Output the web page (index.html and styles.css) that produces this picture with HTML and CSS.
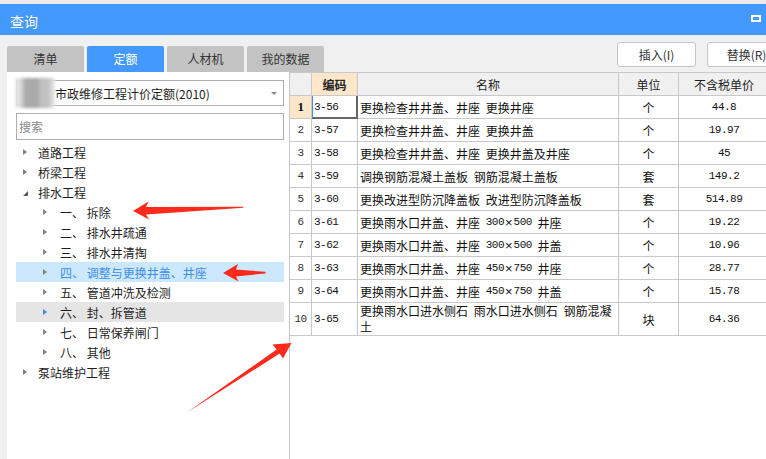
FILE: index.html
```html
<!DOCTYPE html>
<html lang="zh">
<head>
<meta charset="utf-8">
<title>查询</title>
<link rel="stylesheet" href="styles.css">
</head>
<body>
<div class="app">
  <div class="topstrip"></div>
  <div class="titlebar">
    <span class="title">查询</span>
    <span class="max-icon"></span>
  </div>
  <div class="toolbar">
    <div class="tabs">
      <div class="tab">清单</div>
      <div class="tab active">定额</div>
      <div class="tab">人材机</div>
      <div class="tab">我的数据</div>
    </div>
    <div class="actions">
      <button class="btn">插入(I)</button>
      <button class="btn">替换(R)</button>
    </div>
  </div>
  <div class="main">
    <div class="left">
      <div class="select">
        <span class="blur"></span>
        <span class="select-text">市政维修工程计价定额(2010)</span>
        <span class="caret"></span>
      </div>
      <div class="search">搜索</div>
      <ul class="tree">
        <li class="node l0"><span class="tri"></span>道路工程</li>
        <li class="node l0"><span class="tri"></span>桥梁工程</li>
        <li class="node l0"><span class="tri open"></span>排水工程</li>
        <li class="node l1"><span class="tri"></span>一、 拆除</li>
        <li class="node l1"><span class="tri"></span>二、 排水井疏通</li>
        <li class="node l1"><span class="tri"></span>三、 排水井清掏</li>
        <li class="node l1 selected"><span class="tri"></span>四、 调整与更换井盖、井座</li>
        <li class="node l1"><span class="tri"></span>五、 管道冲洗及检测</li>
        <li class="node l1 hover2"><span class="tri"></span>六、 封、拆管道</li>
        <li class="node l1"><span class="tri"></span>七、 日常保养闸门</li>
        <li class="node l1"><span class="tri"></span>八、 其他</li>
        <li class="node l0"><span class="tri"></span>泵站维护工程</li>
      </ul>
    </div>
    <div class="gridp">
      <div class="row head">
        <div class="cell"></div>
        <div class="cell ctr code-head">编码</div>
        <div class="cell ctr">名称</div>
        <div class="cell ctr">单位</div>
        <div class="cell ctr">不含税单价</div>
      </div>
      <div class="row">
        <div class="cell ctr num cur">1</div>
        <div class="cell code sel">3-56</div>
        <div class="cell name">更换检查井井盖、井座 更换井座</div>
        <div class="cell ctr">个</div>
        <div class="cell ctr price">44.8</div>
      </div>
      <div class="row">
        <div class="cell ctr num">2</div>
        <div class="cell code">3-57</div>
        <div class="cell name">更换检查井井盖、井座 更换井盖</div>
        <div class="cell ctr">个</div>
        <div class="cell ctr price">19.97</div>
      </div>
      <div class="row">
        <div class="cell ctr num">3</div>
        <div class="cell code">3-58</div>
        <div class="cell name">更换检查井井盖、井座 更换井盖及井座</div>
        <div class="cell ctr">个</div>
        <div class="cell ctr price">45</div>
      </div>
      <div class="row">
        <div class="cell ctr num">4</div>
        <div class="cell code">3-59</div>
        <div class="cell name">调换钢筋混凝土盖板 钢筋混凝土盖板</div>
        <div class="cell ctr">套</div>
        <div class="cell ctr price">149.2</div>
      </div>
      <div class="row">
        <div class="cell ctr num">5</div>
        <div class="cell code">3-60</div>
        <div class="cell name">更换改进型防沉降盖板 改进型防沉降盖板</div>
        <div class="cell ctr">套</div>
        <div class="cell ctr price">514.89</div>
      </div>
      <div class="row">
        <div class="cell ctr num">6</div>
        <div class="cell code">3-61</div>
        <div class="cell name">更换雨水口井盖、井座 <span class="dim">300</span><span class="times">×</span><span class="dim">500</span> 井座</div>
        <div class="cell ctr">个</div>
        <div class="cell ctr price">19.22</div>
      </div>
      <div class="row">
        <div class="cell ctr num">7</div>
        <div class="cell code">3-62</div>
        <div class="cell name">更换雨水口井盖、井座 <span class="dim">300</span><span class="times">×</span><span class="dim">500</span> 井盖</div>
        <div class="cell ctr">个</div>
        <div class="cell ctr price">10.96</div>
      </div>
      <div class="row">
        <div class="cell ctr num">8</div>
        <div class="cell code">3-63</div>
        <div class="cell name">更换雨水口井盖、井座 <span class="dim">450</span><span class="times">×</span><span class="dim">750</span> 井座</div>
        <div class="cell ctr">个</div>
        <div class="cell ctr price">28.77</div>
      </div>
      <div class="row">
        <div class="cell ctr num">9</div>
        <div class="cell code">3-64</div>
        <div class="cell name">更换雨水口井盖、井座 <span class="dim">450</span><span class="times">×</span><span class="dim">750</span> 井盖</div>
        <div class="cell ctr">个</div>
        <div class="cell ctr price">15.78</div>
      </div>
      <div class="row tall">
        <div class="cell ctr num">10</div>
        <div class="cell code">3-65</div>
        <div class="cell name wrap"><span class="line">更换雨水口进水侧石 雨水口进水侧石 钢筋混凝</span><span class="line">土</span></div>
        <div class="cell ctr">块</div>
        <div class="cell ctr price">64.36</div>
      </div>
    </div>
  </div>
  <svg class="arrows" width="766" height="459" viewBox="0 0 766 459">
    <polygon points="133,211 148.5,201.5 146,207 243,206.8 243.5,207.8 146,214.5 149,219.5" />
    <polygon points="223,273 238,264 236,269.5 265.5,271.8 265.5,273.4 236,276.5 238.5,281.5" />
    <polygon points="291.5,343 272.5,344.5 276.6,349.6 186.5,412.8 279.6,353.6 283,358.5" />
  </svg>
</div>
</body>
</html>
```

FILE: styles.css
```css
* { box-sizing: border-box; }
html, body { margin: 0; padding: 0; }
body {
  width: 766px;
  height: 459px;
  overflow: hidden;
  background: #f0f0f0;
  font-family: "Noto Sans CJK SC", "Noto Sans", sans-serif;
  font-size: 12px;
  color: #1e1e1e;
}
.app { position: relative; width: 766px; height: 459px; overflow: hidden; }

.topstrip { height: 4px; background: #ebebeb; }

.titlebar {
  height: 31px;
  background: #4499ff;
  display: flex;
  align-items: center;
  padding: 0 5px 0 10px;
}
.title { color: #fff; font-size: 14px; line-height: 1; margin-top: 2px; }
.max-icon {
  margin-left: auto;
  width: 10px;
  height: 7px;
  border: 2px solid #fff;
  margin-top: -2px;
}

.toolbar { height: 37px; display: flex; }
.tabs { display: flex; gap: 3px; padding-left: 7px; align-self: flex-end; }
.tab {
  width: 77px;
  height: 26px;
  background: #c3c3c3;
  border-radius: 2px 2px 0 0;
  display: flex;
  align-items: center;
  justify-content: center;
  color: #333;
  font-size: 12px;
  padding-bottom: 1px;
}
.tab.active { background: #4499ff; color: #fff; }
.actions { margin-left: auto; margin-right: -20px; display: flex; gap: 11px; padding-top: 7px; }
.btn {
  width: 79px;
  height: 25px;
  background: #fff;
  border: 1px solid #c6c6c6;
  border-radius: 3px;
  font: inherit;
  color: #333;
  padding: 0;
}

.main { display: flex; height: 387px; }
.left {
  width: 283px;
  flex: none;
  margin-left: 7px;
  background: #fff;
  border-right: 1px solid #c8c8c8;
  padding: 8px 0 0 9px;
}
.select {
  width: 268px;
  height: 26px;
  border: 1px solid #abadb3;
  display: flex;
  align-items: center;
}
.blur {
  flex: none;
  width: 40px;
  height: 30px;
  margin-left: -2px;
  background: linear-gradient(90deg, #ececec 0%, #dcdcdc 14%, #ababab 26%, #a9a9a9 55%, #bdbdbd 64%, #c4c4c4 84%, #ededed 100%);
  filter: blur(1.5px);
}
.select-text { color: #1e1e1e; }
.caret {
  margin-left: auto;
  margin-right: 6px;
  width: 0;
  height: 0;
  border-left: 3px solid transparent;
  border-right: 3px solid transparent;
  border-top: 3px solid #8a8a8a;
}
.search {
  margin-top: 7px;
  width: 268px;
  height: 27px;
  border: 1px solid #abadb3;
  color: #8a8a8a;
  padding-left: 2px;
  display: flex;
  align-items: center;
}

.tree { list-style: none; margin: 2px 0 0; padding: 0; width: 268px; }
.node {
  height: 20px;
  display: flex;
  align-items: center;
  white-space: pre;
  color: #1e1e1e;
}
.l0 { padding-left: 7px; }
.l1 { padding-left: 27px; }
.tri {
  flex: none;
  width: 0;
  height: 0;
  border-left: 4px solid #808080;
  border-top: 3.5px solid transparent;
  border-bottom: 3.5px solid transparent;
}
.l0 .tri { margin-right: 11px; }
.l1 .tri { margin-right: 13px; }
.l0 .tri.open {
  border-left: 0;
  border-bottom: 0;
  border-top: 5px solid transparent;
  border-right: 5px solid #5a5a5a;
  margin-right: 10px;
  margin-top: 2px;
}
.selected { background: #cce8ff; color: #3d8ee6; }
.hover2 { background: #e5e5e5; }
.hover2 .tri { border-left-color: #3d8ee6; }

.gridp { flex: 1; background: #fff; overflow: hidden; }
.row {
  display: grid;
  grid-template-columns: 22px 46px 261px 60px 91px;
  width: 480px;
}
.cell {
  height: 23px;
  border-right: 1px solid #c8c8c8;
  border-bottom: 1px solid #c8c8c8;
  display: flex;
  align-items: center;
  white-space: pre;
  overflow: hidden;
  color: #111;
}
.head { border-top: 1px solid #c8c8c8; background: #f0f0f0; }
.head .cell { color: #222; }
.ctr { justify-content: center; }
.code-head { background: #fde6c9; font-weight: bold; }
.num, .code, .price {
  font-family: "Liberation Mono", monospace;
  font-size: 11px;
  letter-spacing: -0.5px;
}
.num { color: #333; }
.num.cur {
  background: #fde6c9;
  font-family: "Liberation Serif", serif;
  font-weight: bold;
  font-size: 13px;
  color: #111;
}
.code { padding-left: 2px; }
.code.sel {
  border-right-color: #666;
  border-bottom-color: #666;
  box-shadow: inset 1px 0 0 #3c8fe8, inset -1px -1px 0 #666;
}
.name { padding-left: 2px; word-spacing: 3px; }
.dim { font-family: "Liberation Mono", monospace; font-size: 11px; letter-spacing: -0.5px; word-spacing: 0; }
.times { font-family: "Liberation Sans", sans-serif; font-size: 13px; padding: 0 1px; }
.tall .cell { height: 33px; }
.wrap { flex-direction: column; align-items: flex-start; justify-content: center; }
.line { display: block; height: 16px; line-height: 16px; }

.arrows { position: absolute; left: 0; top: 0; pointer-events: none; }
.arrows polygon { fill: #ff2a1c; }
```
